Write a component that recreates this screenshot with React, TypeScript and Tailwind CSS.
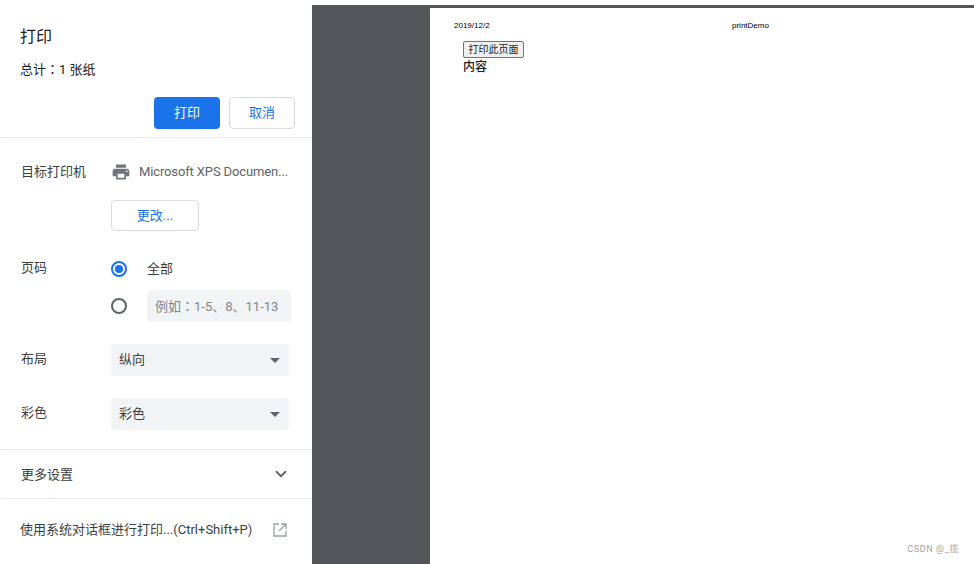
import { ChevronDown } from 'lucide-react';

const font = "font-['Roboto','Noto_Sans_CJK_SC',sans-serif]";

function Colon() {
  return <span className="font-['Noto_Sans_CJK_TC',sans-serif]">：</span>;
}

function SelectBox({ value }: { value: string }) {
  return (
    <div className="w-[178px] h-8 rounded bg-[#f1f3f4] flex items-center justify-between pl-2 pr-[8px] text-[13px] text-[#3c4043]">
      <span>{value}</span>
      <span className="w-0 h-0 border-x-[5px] border-x-transparent border-t-[5px] border-t-[#5f6368] mr-[1px]" />
    </div>
  );
}

function Sidebar() {
  return (
    <div className="w-[312px] h-full shrink-0 bg-white flex flex-col text-[#202124]">
      {/* Header */}
      <div className="h-[138px] border-b border-[#e8eaed] ml-px">
        <h1 className="pl-[19px] pt-[26px] text-base leading-[22px] font-normal">打印</h1>
        <p className="pl-[19px] mt-[12px] text-[13px] leading-[18px]">总计<Colon />1 张纸</p>
        <div className="flex justify-end gap-[9px] pr-[17px] mt-[18px]">
          <button className="w-[66px] h-8 rounded bg-[#1a73e8] text-white text-[13px]">打印</button>
          <button className="w-[66px] h-8 rounded border border-[#dadce0] bg-white text-[#1a73e8] text-[13px]">取消</button>
        </div>
      </div>

      {/* Settings */}
      <div className="h-[312px] border-b border-[#e8eaed] ml-px">
        <div className="flex pl-5 pt-[25px]">
          <span className="w-[90px] text-[13px] leading-[18px] text-[#3c4043]">目标打印机</span>
          <svg viewBox="0 0 24 24" className="w-[20px] h-[20px] mt-[-1px] fill-[#70757a]">
            <path d="M19 8H5c-1.66 0-3 1.34-3 3v6h4v4h12v-4h4v-6c0-1.66-1.34-3-3-3zm-3 11H8v-5h8v5zm3-7c-.55 0-1-.45-1-1s.45-1 1-1 1 .45 1 1-.45 1-1 1zm-1-9H6v4h12V3z" />
          </svg>
          <span className="ml-2 text-[13px] leading-[18px] tracking-[-0.13px] text-[#5f6368] whitespace-nowrap">Microsoft XPS Documen...</span>
        </div>
        <div className="pl-[110px] mt-[18px]">
          <button className="w-[88px] h-[31px] rounded border border-[#dadce0] bg-white text-[#1a73e8] text-[13px]">更改...</button>
        </div>

        <div className="flex pl-5 mt-[20px]">
          <span className="w-[90px] text-[13px] leading-[18px] text-[#3c4043] pt-[8px]">页码</span>
          <div className="flex flex-col">
            <div className="flex items-center h-[36px]">
              <span className="w-4 h-4 rounded-full border-2 border-[#1a73e8] flex items-center justify-center">
                <span className="w-2 h-2 rounded-full bg-[#1a73e8]" />
              </span>
              <span className="ml-5 text-[13px] text-[#3c4043]">全部</span>
            </div>
            <div className="flex items-center mt-[3px]">
              <span className="w-4 h-4 rounded-full border-2 border-[#5f6368]" />
              <div className="ml-5 w-[144px] h-8 rounded bg-[#f1f3f4] flex items-center pl-2 text-[13px] text-[#80868b]">
                <span>例如<Colon />1-5、8、11-13</span>
              </div>
            </div>
          </div>
        </div>

        <div className="flex items-center pl-5 mt-[22px]">
          <span className="w-[90px] text-[13px] leading-[18px] text-[#3c4043] -mt-[3px]">布局</span>
          <SelectBox value="纵向" />
        </div>
        <div className="flex items-center pl-5 mt-[22px]">
          <span className="w-[90px] text-[13px] leading-[18px] text-[#3c4043] -mt-[3px]">彩色</span>
          <SelectBox value="彩色" />
        </div>
      </div>

      {/* More settings */}
      <div className="h-[49px] border-b border-[#e8eaed] ml-px flex items-center justify-between pl-5 pr-[22px] pt-[2px] text-[13px] text-[#3c4043]">
        <span>更多设置</span>
        <ChevronDown className="w-[18px] h-[18px] text-[#5f6368] -mt-[2px]" strokeWidth={2.4} />
      </div>

      {/* System dialog */}
      <div className="flex items-center justify-between pl-[20px] pr-[25px] pt-[2px] h-[60px] text-[13px] text-[#3c4043]">
        <span>使用系统对话框进行打印...(Ctrl+Shift+P)</span>
        <svg viewBox="0 0 14 14" fill="none" className="w-[14px] h-[14px] stroke-[#9aa0a6]" strokeWidth="1.3">
          <path d="M6 1H1v12h12V8M8 1h5v5M13 1L6 8" />
        </svg>
      </div>
    </div>
  );
}

function PreviewPage() {
  return (
    <div className="flex-1 h-full bg-white text-black font-['Liberation_Sans','Noto_Sans_CJK_SC',sans-serif]">
      <div className="flex pl-[24px] pt-[13px] text-[8px] leading-[9px]">
        <span className="w-[278px]">2019/12/2</span>
        <span>printDemo</span>
      </div>
      <div className="pl-[33px] pt-[11px]">
        <button className="block w-[61px] h-[17px] border border-[#767676] rounded-[2px] bg-[#efefef] text-[10px] leading-[15px] text-[#222]">打印此页面</button>
        <p className="mt-[2px] text-[12px] leading-[15px] font-medium text-[#222]">内容</p>
      </div>
    </div>
  );
}

export default function App() {
  return (
    <div className={`w-[974px] h-[564px] bg-white flex overflow-hidden relative ${font}`}>
      <Sidebar />
      <div className="flex-1 h-full pt-[5px]">
        <div className="h-full bg-[#53575a] pt-[3px] pl-[118px] flex">
          <PreviewPage />
        </div>
      </div>
      <span className="absolute right-[15px] bottom-[9px] text-[9px] leading-3 text-[#a3a3a3] tracking-[0.6px]">CSDN @_揽</span>
    </div>
  );
}
